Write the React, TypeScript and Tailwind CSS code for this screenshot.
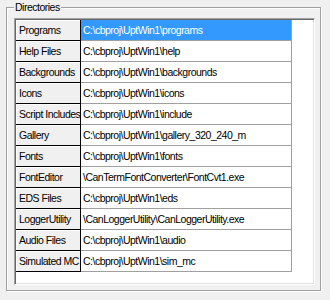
const rows: [string, string][] = [
  ["Programs", "C:\\cbproj\\UptWin1\\programs"],
  ["Help Files", "C:\\cbproj\\UptWin1\\help"],
  ["Backgrounds", "C:\\cbproj\\UptWin1\\backgrounds"],
  ["Icons", "C:\\cbproj\\UptWin1\\icons"],
  ["Script Includes", "C:\\cbproj\\UptWin1\\include"],
  ["Gallery", "C:\\cbproj\\UptWin1\\gallery_320_240_m"],
  ["Fonts", "C:\\cbproj\\UptWin1\\fonts"],
  ["FontEditor", "\\CanTermFontConverter\\FontCvt1.exe"],
  ["EDS Files", "C:\\cbproj\\UptWin1\\eds"],
  ["LoggerUtility", "\\CanLoggerUtility\\CanLoggerUtility.exe"],
  ["Audio Files", "C:\\cbproj\\UptWin1\\audio"],
  ["Simulated MC", "C:\\cbproj\\UptWin1\\sim_mc"],
];

export default function App() {
  return (
    <div className="w-[330px] h-[300px] bg-[#f0f0f0] pl-[6px] pt-[7px] text-[10.5px] tracking-[-0.5px] text-black font-['Liberation_Sans',sans-serif]">
      {/* group box */}
      <div className="relative w-[315px] h-[284px] border border-[#a0a0a0] shadow-[1px_1px_0_#fff,inset_1px_1px_0_#fff] pl-[7px] pt-[10px]">
        <span className="absolute left-[7px] top-[-7px] px-[1px] bg-[#f0f0f0] leading-[13px]">
          Directories
        </span>

        {/* string grid */}
        <div className="w-[301px] h-[267px] border border-t-[#a0a0a0] border-l-[#a0a0a0] border-b-white border-r-white bg-white shadow-[inset_1px_1px_0_#696969,inset_-1px_-1px_0_#e3e3e3] p-[1px]">
          {rows.map(([label, path], i) => (
            <div key={label} className="flex h-[21px]">
              <div className="w-[65px] shrink-0 h-full border-r border-b border-black bg-[#f0f0f0] shadow-[inset_1px_1px_0_#fff] pl-[3px] leading-[20px] whitespace-nowrap overflow-hidden">
                {label}
              </div>
              <div
                className={
                  i === 0
                    ? "w-[211px] shrink-0 h-full border-r border-b border-[#a0a0a0] bg-[#3399ff] text-white pl-[2px] leading-[20px] whitespace-nowrap overflow-hidden"
                    : "w-[211px] shrink-0 h-full border-r border-b border-[#a0a0a0] bg-white pl-[2px] leading-[20px] whitespace-nowrap overflow-hidden"
                }
              >
                {path}
              </div>
            </div>
          ))}
        </div>
      </div>
    </div>
  );
}
